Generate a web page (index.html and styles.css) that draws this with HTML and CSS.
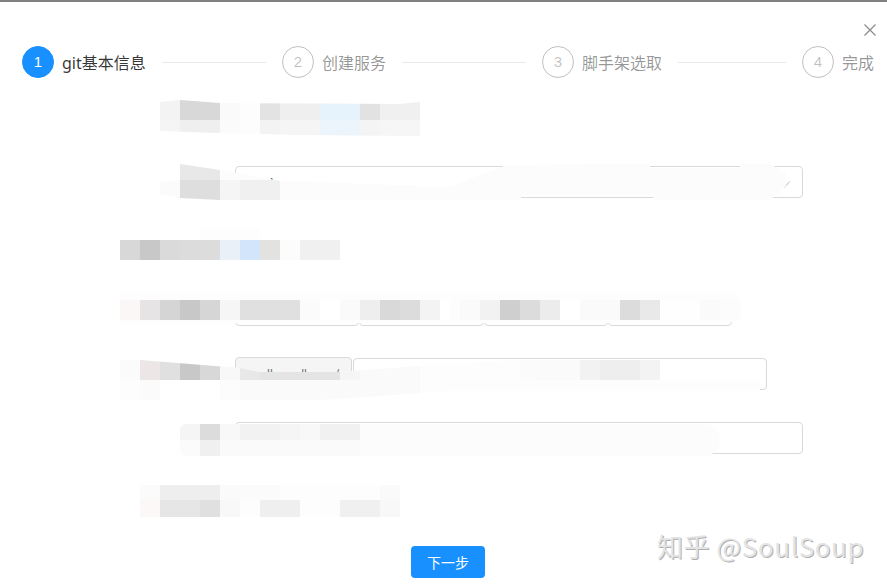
FILE: index.html
```html
<!DOCTYPE html>
<html lang="zh-CN">
<head>
  <meta charset="UTF-8" />
  <meta name="viewport" content="width=device-width, initial-scale=1.0" />
  <title>创建服务</title>
  <link rel="stylesheet" href="styles.css">
</head>
<body>
  <div class="modal">
    <button class="close-btn" aria-label="关闭">
      <svg width="12" height="12" viewBox="0 0 12 12"><path d="M0.5 0.5L11.5 11.5M11.5 0.5L0.5 11.5" /></svg>
    </button>

    <div class="steps">
      <div class="step active">
        <span class="step-num">1</span>
        <span class="step-title">git基本信息</span>
        <span class="step-line"></span>
      </div>
      <div class="step">
        <span class="step-num">2</span>
        <span class="step-title">创建服务</span>
        <span class="step-line"></span>
      </div>
      <div class="step">
        <span class="step-num">3</span>
        <span class="step-title">脚手架选取</span>
        <span class="step-line"></span>
      </div>
      <div class="step last">
        <span class="step-num">4</span>
        <span class="step-title">完成</span>
      </div>
    </div>

    <div class="form">
      <div class="row">
        <div class="blur blur-1"></div>
      </div>

      <div class="row">
        <div class="select">
          <span class="select-value">^</span>
          <svg class="select-arrow" width="12" height="8" viewBox="0 0 12 8"><path d="M0.5 0.5L6 7L11.5 0.5" /></svg>
        </div>
        <div class="blur blur-2"></div>
      </div>

      <div class="row">
        <div class="blur blur-3"></div>
      </div>

      <div class="row">
        <div class="radio-group">
          <span class="radio-btn"></span>
          <span class="radio-btn"></span>
          <span class="radio-btn"></span>
          <span class="radio-btn"></span>
        </div>
        <div class="blur blur-4-back"></div>
        <div class="blur blur-4"></div>
      </div>

      <div class="row">
        <div class="input-group">
          <div class="addon"><span>ll</span><span>ll</span><span>/</span></div>
          <div class="input"><span class="input-value">'</span></div>
        </div>
        <div class="blur blur-5"></div>
      </div>

      <div class="row">
        <div class="input wide"></div>
        <div class="blur blur-6"></div>
      </div>

      <div class="row last-row">
        <div class="blur blur-7"></div>
      </div>
    </div>

    <div class="footer">
      <button class="next-btn">下一步</button>
    </div>

    <div class="watermark">知乎 @SoulSoup</div>
  </div>
</body>
</html>
```

FILE: styles.css
```css
* {
  box-sizing: border-box;
}
body {
  margin: 0;
  background: #fff;
  font-family: "Noto Sans", "Noto Sans CJK SC", sans-serif;
  font-size: 14px;
  color: rgba(0,0,0,0.65);
}
.modal {
  position: relative;
  height: 588px;
  border-top: 2px solid #808080;
  overflow: hidden;
}
.close-btn {
  position: absolute;
  top: 22px;
  right: 11px;
  padding: 0;
  border: none;
  background: none;
  line-height: 0;
}
.close-btn path {
  fill: none;
  stroke: #8a8a8a;
  stroke-width: 1.2;
}

/* steps */
.steps {
  display: flex;
  margin-top: 44px;
  padding-left: 22px;
}
.step {
  flex: 0 0 260px;
  display: flex;
  align-items: center;
  height: 32px;
}
.step.last {
  flex: 0 0 auto;
}
.step-num {
  flex: none;
  width: 32px;
  height: 32px;
  line-height: 30px;
  border: 1px solid rgba(0,0,0,0.25);
  border-radius: 50%;
  text-align: center;
  font-family: "Liberation Sans", sans-serif;
  font-size: 15px;
  color: rgba(0,0,0,0.25);
}
.step-title {
  flex: none;
  margin-left: 8px;
  font-size: 16px;
  color: rgba(0,0,0,0.42);
}
.step-line {
  flex: 1;
  height: 1px;
  margin: 0 16px;
  background: #e8e8e8;
}
.step.active .step-num {
  border-color: #1890ff;
  background: #1890ff;
  color: #fff;
}
.step.active .step-title {
  color: rgba(0,0,0,0.8);
}

/* form */
.form {
  margin-top: 24px;
}
.row {
  position: relative;
  width: 803px;
  height: 32px;
  margin-bottom: 32px;
  padding-left: 235px;
}
.row.last-row {
  margin-bottom: 28px;
}
.select, .input {
  height: 32px;
  border: 1px solid #d9d9d9;
  border-radius: 4px;
  background: #fff;
}
.select {
  position: relative;
  display: flex;
  align-items: center;
  justify-content: flex-end;
  padding: 0 12px 0 32px;
}
.select-value {
  margin-right: auto;
  color: #444;
  font-size: 13px;
}
.select-arrow {
  margin-top: 6px;
}
.select-arrow path {
  fill: none;
  stroke: #bbb;
  stroke-width: 1;
}
.radio-group {
  display: flex;
  width: 497px;
  height: 32px;
}
.radio-btn {
  flex: 1;
  height: 32px;
  border: 1px solid #d9d9d9;
  border-radius: 4px;
}
.input-group {
  display: flex;
  width: 532px;
}
.addon {
  flex: none;
  display: flex;
  justify-content: space-between;
  width: 117px;
  height: 33px;
  margin-top: -1px;
  padding: 8px 12px 0 31px;
  border: 1px solid #d9d9d9;
  border-radius: 4px;
  background: #f5f5f5;
  color: #777;
  font-family: "Liberation Sans", sans-serif;
  font-size: 13px;
}
.input-group .input {
  flex: 1;
  margin-left: 1px;
  padding: 6px 0 0 18px;
  color: #777;
}
.input.wide {
  width: 568px;
}

/* mosaic patches laid over the form */
.blur {
  position: absolute;
  background-color: #fcfcfc;
  background-repeat: no-repeat;
}
.blur-1 {
  top: -2px;
  left: 160px;
  width: 260px;
  height: 36px;
  background-image:
    linear-gradient(to right, #f3f3f3 0 20px, #d8d8d8 20px 60px, #fafafa 60px 80px, #fdfdfd 80px 100px, #e3e3e3 100px 120px, #efefef 120px 160px, #e6f2fc 160px 200px, #e2e2e2 200px 220px, #f0f0f0 220px 260px),
    linear-gradient(to right, #f5f5f5 0 20px, #efefef 20px 60px, #fbfbfb 60px 80px, #fdfdfd 80px 100px, #f3f3f3 100px 120px, #f5f5f5 120px 160px, #edf5fc 160px 200px, #f4f4f4 200px 220px, #f6f6f6 220px 260px);
  background-size: 100% 20px, 100% 16px;
  background-position: 0 0, 0 20px;
  clip-path: polygon(0 2px, 20px 0, 60px 3px, 240px 4px, 260px 2px, 260px 36px, 140px 35px, 60px 33px, 0 31px);
}
.blur-2 {
  top: -2px;
  left: 160px;
  width: 630px;
  height: 36px;
  background-image:
    linear-gradient(to right, #fff 0 20px, #e8e8e8 20px 60px, #fcfcfc 60px 630px),
    linear-gradient(to right, #fbfbfb 0 20px, #dedede 20px 60px, #f5f5f5 60px 80px, #f0f0f0 80px 120px, #fcfcfc 120px 630px);
  background-size: 100% 16px, 100% 20px;
  background-position: 0 0, 0 16px;
  clip-path: polygon(20px 0, 60px 6px, 120px 17px, 290px 23px, 347px 1px, 490px 0, 490px 4px, 580px 4px, 580px 0, 610px 0, 626px 10px, 626px 22px, 610px 36px, 495px 36px, 492px 31px, 362px 31px, 360px 36px, 60px 36px, 20px 34px, 0 30px, 0 18px, 20px 16px);
}
.blur-3 {
  top: -2px;
  left: 120px;
  width: 220px;
  height: 32px;
  background-image:
    linear-gradient(to right, #fff 0 80px, #fdfdfd 80px 100px, #fdfdfd 100px 140px, #fff 140px 220px),
    linear-gradient(to right, #d8d8d8 0 20px, #c8c8c8 20px 40px, #dadada 40px 60px, #dcdcdc 60px 100px, #e9f0f8 100px 120px, #d2e5fa 120px 140px, #e2e2e0 140px 160px, #fcfcfc 160px 180px, #f0f0f0 180px 220px);
  background-size: 100% 12px, 100% 20px;
  background-position: 0 0, 0 12px;
}
.blur-4-back {
  top: -2px;
  left: 120px;
  width: 622px;
  height: 31px;
  border-radius: 0 24px 24px 0;
  background-color: #fdfdfd;
}
.blur-4 {
  top: 6px;
  left: 120px;
  width: 620px;
  height: 20px;
  background-image: linear-gradient(to right, #fbf7f6 0 20px, #e6e4e4 20px 40px, #d5d5d5 40px 60px, #c8c8c8 60px 80px, #d6d6d6 80px 100px, #f6f6f6 100px 120px, #e0e0e0 120px 180px, #fbfbfb 180px 200px, #fff 200px 220px, #fafafa 220px 240px, #eeeeee 240px 260px, #d9d9d9 260px 280px, #dcdcdc 280px 300px, #f3f3f3 300px 320px, #fff 320px 330px, #fdfdfd 330px 340px, #fafafa 340px 360px, #f2f2f2 360px 380px, #cfcfcf 380px 400px, #dcdcdc 400px 420px, #ececec 420px 440px, #fff 440px 460px, #fafafa 460px 500px, #dcdcdc 500px 520px, #e9e9e9 520px 540px, #fefefe 540px 580px, #fafafa 580px 600px, #fcfcfc 600px 620px);
}
.blur-5 {
  top: 2px;
  left: 120px;
  width: 640px;
  height: 40px;
  background-image:
    linear-gradient(to right, #fbfbfb 0 20px, #ece6e6 20px 40px, #e0e0e0 40px 60px, #c8c8c8 60px 80px, #d8d8d8 80px 100px, #f8f8f8 100px 120px, #e8e8e8 120px 140px, #e4e4e4 140px 220px, #f5f5f5 220px 240px, #fafafa 240px 300px, #fdfdfd 300px 400px, #fbfbfb 400px 420px, #fafafa 420px 460px, #f2f2f2 460px 480px, #eeeeee 480px 520px, #f3f3f3 520px 540px, #fff 540px 640px),
    linear-gradient(to right, #fdfdfd 0 20px, #fbfbfb 20px 40px, #fff 40px 100px, #fcfcfc 100px 120px, #fafafa 120px 300px, #fdfdfd 300px 640px);
  background-size: 100% 20px, 100% 20px;
  background-position: 0 0, 0 20px;
  clip-path: polygon(0 0, 20px 0, 120px 8px, 140px 12px, 220px 12px, 300px 6px, 400px 0, 540px 0, 540px 20px, 640px 20px, 640px 31px, 330px 31px, 200px 40px, 0 40px);
}
.blur-6 {
  top: 2px;
  left: 180px;
  width: 540px;
  height: 32px;
  border-radius: 8px 20px 20px 8px;
  background-image:
    linear-gradient(to right, #f5f5f5 0 20px, #dcdcdc 20px 40px, #f8f8f8 40px 60px, #f2f2f2 60px 100px, #f5f5f5 100px 120px, #f8f8f8 120px 140px, #f1f1f1 140px 180px, #fcfcfc 180px 540px),
    linear-gradient(to right, #fbfbfb 0 20px, #f0f0f0 20px 40px, #fafafa 40px 180px, #fcfcfc 180px 540px);
  background-size: 100% 16px, 100% 16px;
  background-position: 0 0, 0 16px;
}
.blur-7 {
  top: -1px;
  left: 140px;
  width: 260px;
  height: 32px;
  background-image:
    linear-gradient(to right, #fbfbfb 0 20px, #eeeeee 20px 80px, #fafafa 80px 100px, #fbfbfb 100px 140px, #fdfdfd 140px 240px, #fafafa 240px 260px),
    linear-gradient(to right, #fdf8f8 0 20px, #e6e6e6 20px 60px, #e0e0e0 60px 80px, #f8f8f8 80px 100px, #fdfdfd 100px 120px, #efefef 120px 160px, #fdfdfd 160px 200px, #f0f0f0 200px 240px, #f8f8f8 240px 260px);
  background-size: 100% 15px, 100% 17px;
  background-position: 0 0, 0 15px;
}

/* footer */
.footer {
  display: flex;
  justify-content: center;
  padding-left: 9px;
}
.next-btn {
  width: 74px;
  height: 32px;
  padding: 0;
  border: none;
  border-radius: 4px;
  background: #1890ff;
  color: #fff;
  font-family: "Noto Sans CJK SC", sans-serif;
  font-size: 14px;
}
.watermark {
  position: absolute;
  top: 526px;
  left: 657px;
  font-family: "Noto Sans CJK SC", sans-serif;
  font-size: 26px;
  line-height: 36px;
  letter-spacing: 0.6px;
  white-space: nowrap;
  color: #e4e4e4;
  text-shadow: 1px 1px 0 #b0b0b0;
}
```
